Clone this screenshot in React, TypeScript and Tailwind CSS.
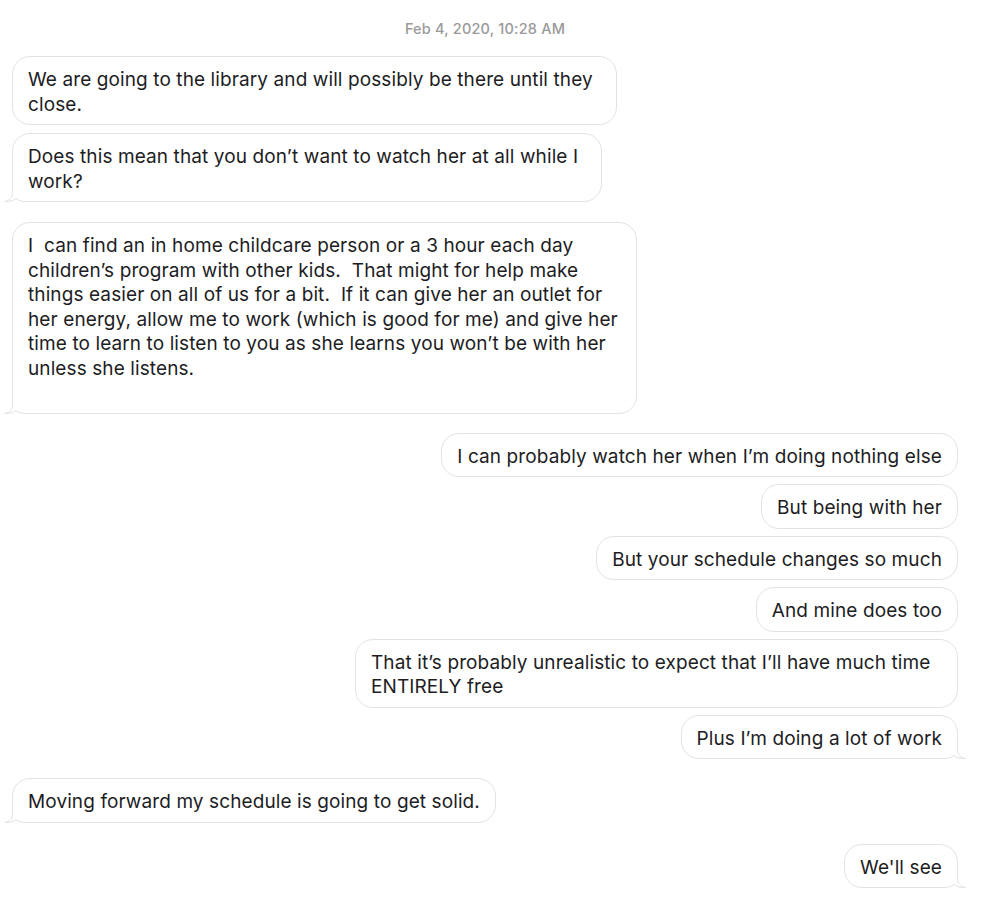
import clsx from 'clsx';

type Side = 'left' | 'right';

type Msg = {
  side: Side;
  lines: string[];
  tail?: boolean;
  width?: string;
  gap: string;
};

const messages: Msg[] = [
  {
    side: 'left',
    lines: ['We are going to the library and will possibly be there until they', 'close.'],
    width: 'w-[605px]',
    gap: 'mt-[20px]',
  },
  {
    side: 'left',
    lines: ['Does this mean that you don’t want to watch her at all while I', 'work?'],
    width: 'w-[590px]',
    gap: 'mt-[8px]',
    tail: true,
  },
  {
    side: 'left',
    lines: [
      'I  can find an in home childcare person or a 3 hour each day',
      'children’s program with other kids.  That might for help make',
      'things easier on all of us for a bit.  If it can give her an outlet for',
      'her energy, allow me to work (which is good for me) and give her',
      'time to learn to listen to you as she learns you won’t be with her',
      'unless she listens.',
      '',
    ],
    width: 'w-[625px]',
    gap: 'mt-[20px]',
    tail: true,
  },
  { side: 'right', lines: ['I can probably watch her when I’m doing nothing else'], gap: 'mt-[19px]' },
  { side: 'right', lines: ['But being with her'], gap: 'mt-[7px]' },
  { side: 'right', lines: ['But your schedule changes so much'], gap: 'mt-[7px]' },
  { side: 'right', lines: ['And mine does too'], gap: 'mt-[7px]' },
  {
    side: 'right',
    lines: ['That it’s probably unrealistic to expect that I’ll have much time', 'ENTIRELY free'],
    width: 'w-[603px]',
    gap: 'mt-[7px]',
  },
  { side: 'right', lines: ['Plus I’m doing a lot of work'], gap: 'mt-[7px]', tail: true },
  { side: 'left', lines: ['Moving forward my schedule is going to get solid.'], gap: 'mt-[19px]', tail: true },
  { side: 'right', lines: ["We'll see"], gap: 'mt-[21px]', tail: true },
];

// little hook in the bottom corner, covers the rounded corner of the bubble
function Tail({ side }: { side: Side }) {
  const outline =
    'M8.5 0 L8.5 15 C8.5 19.5 6 22.5 0.5 23.5 C5 24 9.5 22.5 12 20.5 C14.5 22.8 18 23.5 22 23.5 L26 23.5';
  return (
    <svg
      width="26"
      height="24"
      viewBox="0 0 26 24"
      className={clsx(
        'absolute bottom-[-1px]',
        side === 'left' ? 'left-[-9px]' : 'right-[-9px] -scale-x-100'
      )}
    >
      <path d={outline + ' L26 0 Z'} fill="#ffffff" />
      <path d={outline} fill="none" stroke="#e2e2e2" strokeWidth="1" />
    </svg>
  );
}

function Bubble({ m }: { m: Msg }) {
  return (
    <div className={clsx('flex', m.side === 'left' ? 'justify-start' : 'justify-end', m.gap)}>
      <div
        className={clsx(
          'relative rounded-[18px] border border-[#e2e2e2] bg-white px-[15px] pt-[11px] pb-[7px]',
          m.width
        )}
      >
        {m.tail && <Tail side={m.side} />}
        <div className="relative text-[19px] leading-[24.5px] tracking-[0.1px] text-[#1d1d1f]">
          {m.lines.map((line, i) => (
            <div key={i} className="whitespace-pre">
              {line === '' ? '\u00a0' : line}
            </div>
          ))}
        </div>
      </div>
    </div>
  );
}

export default function App() {
  return (
    <div className="min-h-[910px] bg-white pl-[12px] pr-[36px] font-['Inter',sans-serif]">
      <div className="pt-[22px] text-center text-[14.5px] leading-[14px] font-medium tracking-[0.2px] text-[#999999]">
        Feb 4, 2020, 10:28 AM
      </div>
      {messages.map((m, i) => (
        <Bubble key={i} m={m} />
      ))}
    </div>
  );
}
